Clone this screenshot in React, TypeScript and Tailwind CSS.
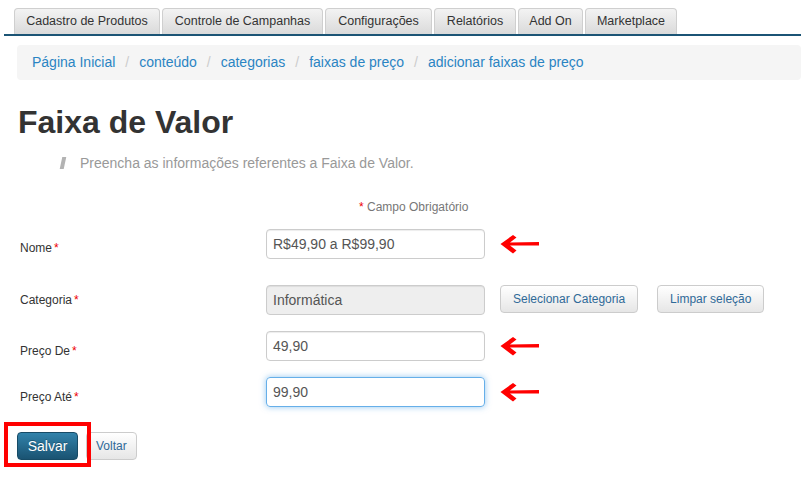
import React from "react";

const tabs: [string, string][] = [
  ["Cadastro de Produtos", "w-[146px]"],
  ["Controle de Campanhas", "w-[161px]"],
  ["Configurações", "w-[107px]"],
  ["Relatórios", "w-[82px]"],
  ["Add On", "w-[65px]"],
  ["Marketplace", "w-[92px]"],
];

const crumbs = ["Página Inicial", "conteúdo", "categorias", "faixas de preço", "adicionar faixas de preço"];

function Arrow() {
  return (
    <svg width="40" height="20" viewBox="0 0 40 20" className="ml-[15px] shrink-0">
      <path d="M0.5 10 L13 1 L16.5 3.5 L10 8.5 L39 8 L39 11.5 L10 11.6 L16.5 16.5 L13 19.5 Z" fill="#ff0000" />
    </svg>
  );
}

function Label({ text, mt }: { text: string; mt: string }) {
  return (
    <div className={`w-[248px] shrink-0 pl-[2px] text-[12px] leading-[16px] text-[#333] ${mt}`}>
      {text}
      <span className="ml-[2px] text-[#e00]">*</span>
    </div>
  );
}

const inputBase = "w-[219px] h-[30px] rounded-[4px] border px-[6px] text-[14px] text-[#555] flex items-center";
const inputCls = `${inputBase} border-[#ccc] shadow-[inset_0_1px_1px_rgba(0,0,0,0.075)]`;
const focusCls = `${inputBase} border-[#66afe9] shadow-[0_0_6px_rgba(102,175,233,0.7)]`;

const btnCls =
  "h-[28px] rounded-[4px] border border-[#ccc] bg-gradient-to-b from-white to-[#e6e6e6] px-[12px] text-[12px] text-[#2f6a98] flex items-center";

export default function App() {
  return (
    <div className="relative w-[801px] h-[482px] overflow-hidden bg-white font-['Liberation_Sans',Arial,sans-serif]">
      {/* ── TABS ── */}
      <div className="pt-2 pl-1">
        <div className="flex gap-[2px] pl-[10px] border-b-2 border-[#1b5475]">
          {tabs.map(([t, w]) => (
            <div key={t}
              className={`${w} h-[26px] flex items-center justify-center rounded-t-[4px] border border-b-0 border-[#cfcfcf] bg-gradient-to-b from-[#f3f3f3] to-[#dadada] text-[12.5px] text-[#333]`}>
              {t}
            </div>
          ))}
        </div>
      </div>

      {/* ── BREADCRUMB ── */}
      <div className="ml-[17px] mt-[9px] h-[35px] rounded-[4px] bg-[#f5f5f5] pl-[15px] flex items-center text-[14px]">
        {crumbs.map((c, i) => (
          <span key={c} className="flex items-center">
            {i > 0 && <span className="px-[10px] text-[#ccc]">/</span>}
            <span className="text-[#2a84c3]">{c}</span>
          </span>
        ))}
      </div>

      <div className="pl-[18px]">
        <h1 className="mt-[24px] text-[32px] leading-[36px] font-bold text-[#333]">Faixa de Valor</h1>

        <div className="mt-[13px] flex items-center h-[20px]">
          <span className="ml-[43px] inline-block w-[4px] h-[12px] bg-[#b3b3b3] -skew-x-12" />
          <span className="ml-[15px] text-[14px] text-[#999]">Preencha as informações referentes a Faixa de Valor.</span>
        </div>

        <div className="mt-[26px] ml-[341px] text-[12px] leading-[16px] text-[#777]">
          <span className="text-[#e00]">*</span> Campo Obrigatório
        </div>

        {/* ── FORM ── */}
        <div className="mt-[14px] flex items-start">
          <Label text="Nome" mt="mt-[11px]" />
          <div className="flex items-center">
            <div className={inputCls}>R$49,90 a R$99,90</div>
            <Arrow />
          </div>
        </div>

        <div className="mt-[26px] flex items-start">
          <Label text="Categoria" mt="mt-[7px]" />
          <div className={`${inputCls} bg-[#eee]`}>Informática</div>
          <div className={`${btnCls} ml-[15px]`}>Selecionar Categoria</div>
          <div className={`${btnCls} ml-[19px]`}>Limpar seleção</div>
        </div>

        <div className="mt-[16px] flex items-start">
          <Label text="Preço De" mt="mt-[12px]" />
          <div className="flex items-center">
            <div className={inputCls}>49,90</div>
            <Arrow />
          </div>
        </div>

        <div className="mt-[16px] flex items-start">
          <Label text="Preço Até" mt="mt-[12px]" />
          <div className="flex items-center">
            <div className={focusCls}>99,90</div>
            <Arrow />
          </div>
        </div>

        <div className="mt-[25px] flex items-center gap-[8px] -ml-[1px]">
          <div className="h-[28px] w-[61px] rounded-[4px] border border-[#174b66] bg-gradient-to-b from-[#3283ab] to-[#1a5372] text-[14px] text-white flex items-center justify-center [text-shadow:0_-1px_0_rgba(0,0,0,0.25)]">
            Salvar
          </div>
          <div className="h-[28px] rounded-[4px] border border-[#ccc] bg-gradient-to-b from-white to-[#e6e6e6] px-[9px] text-[12px] text-[#2f6a98] flex items-center">
            Voltar
          </div>
        </div>
      </div>

      {/* annotation box */}
      <div className="absolute left-[4px] top-[422px] w-[87px] h-[45px] border-4 border-[#ff0000]" />
    </div>
  );
}
